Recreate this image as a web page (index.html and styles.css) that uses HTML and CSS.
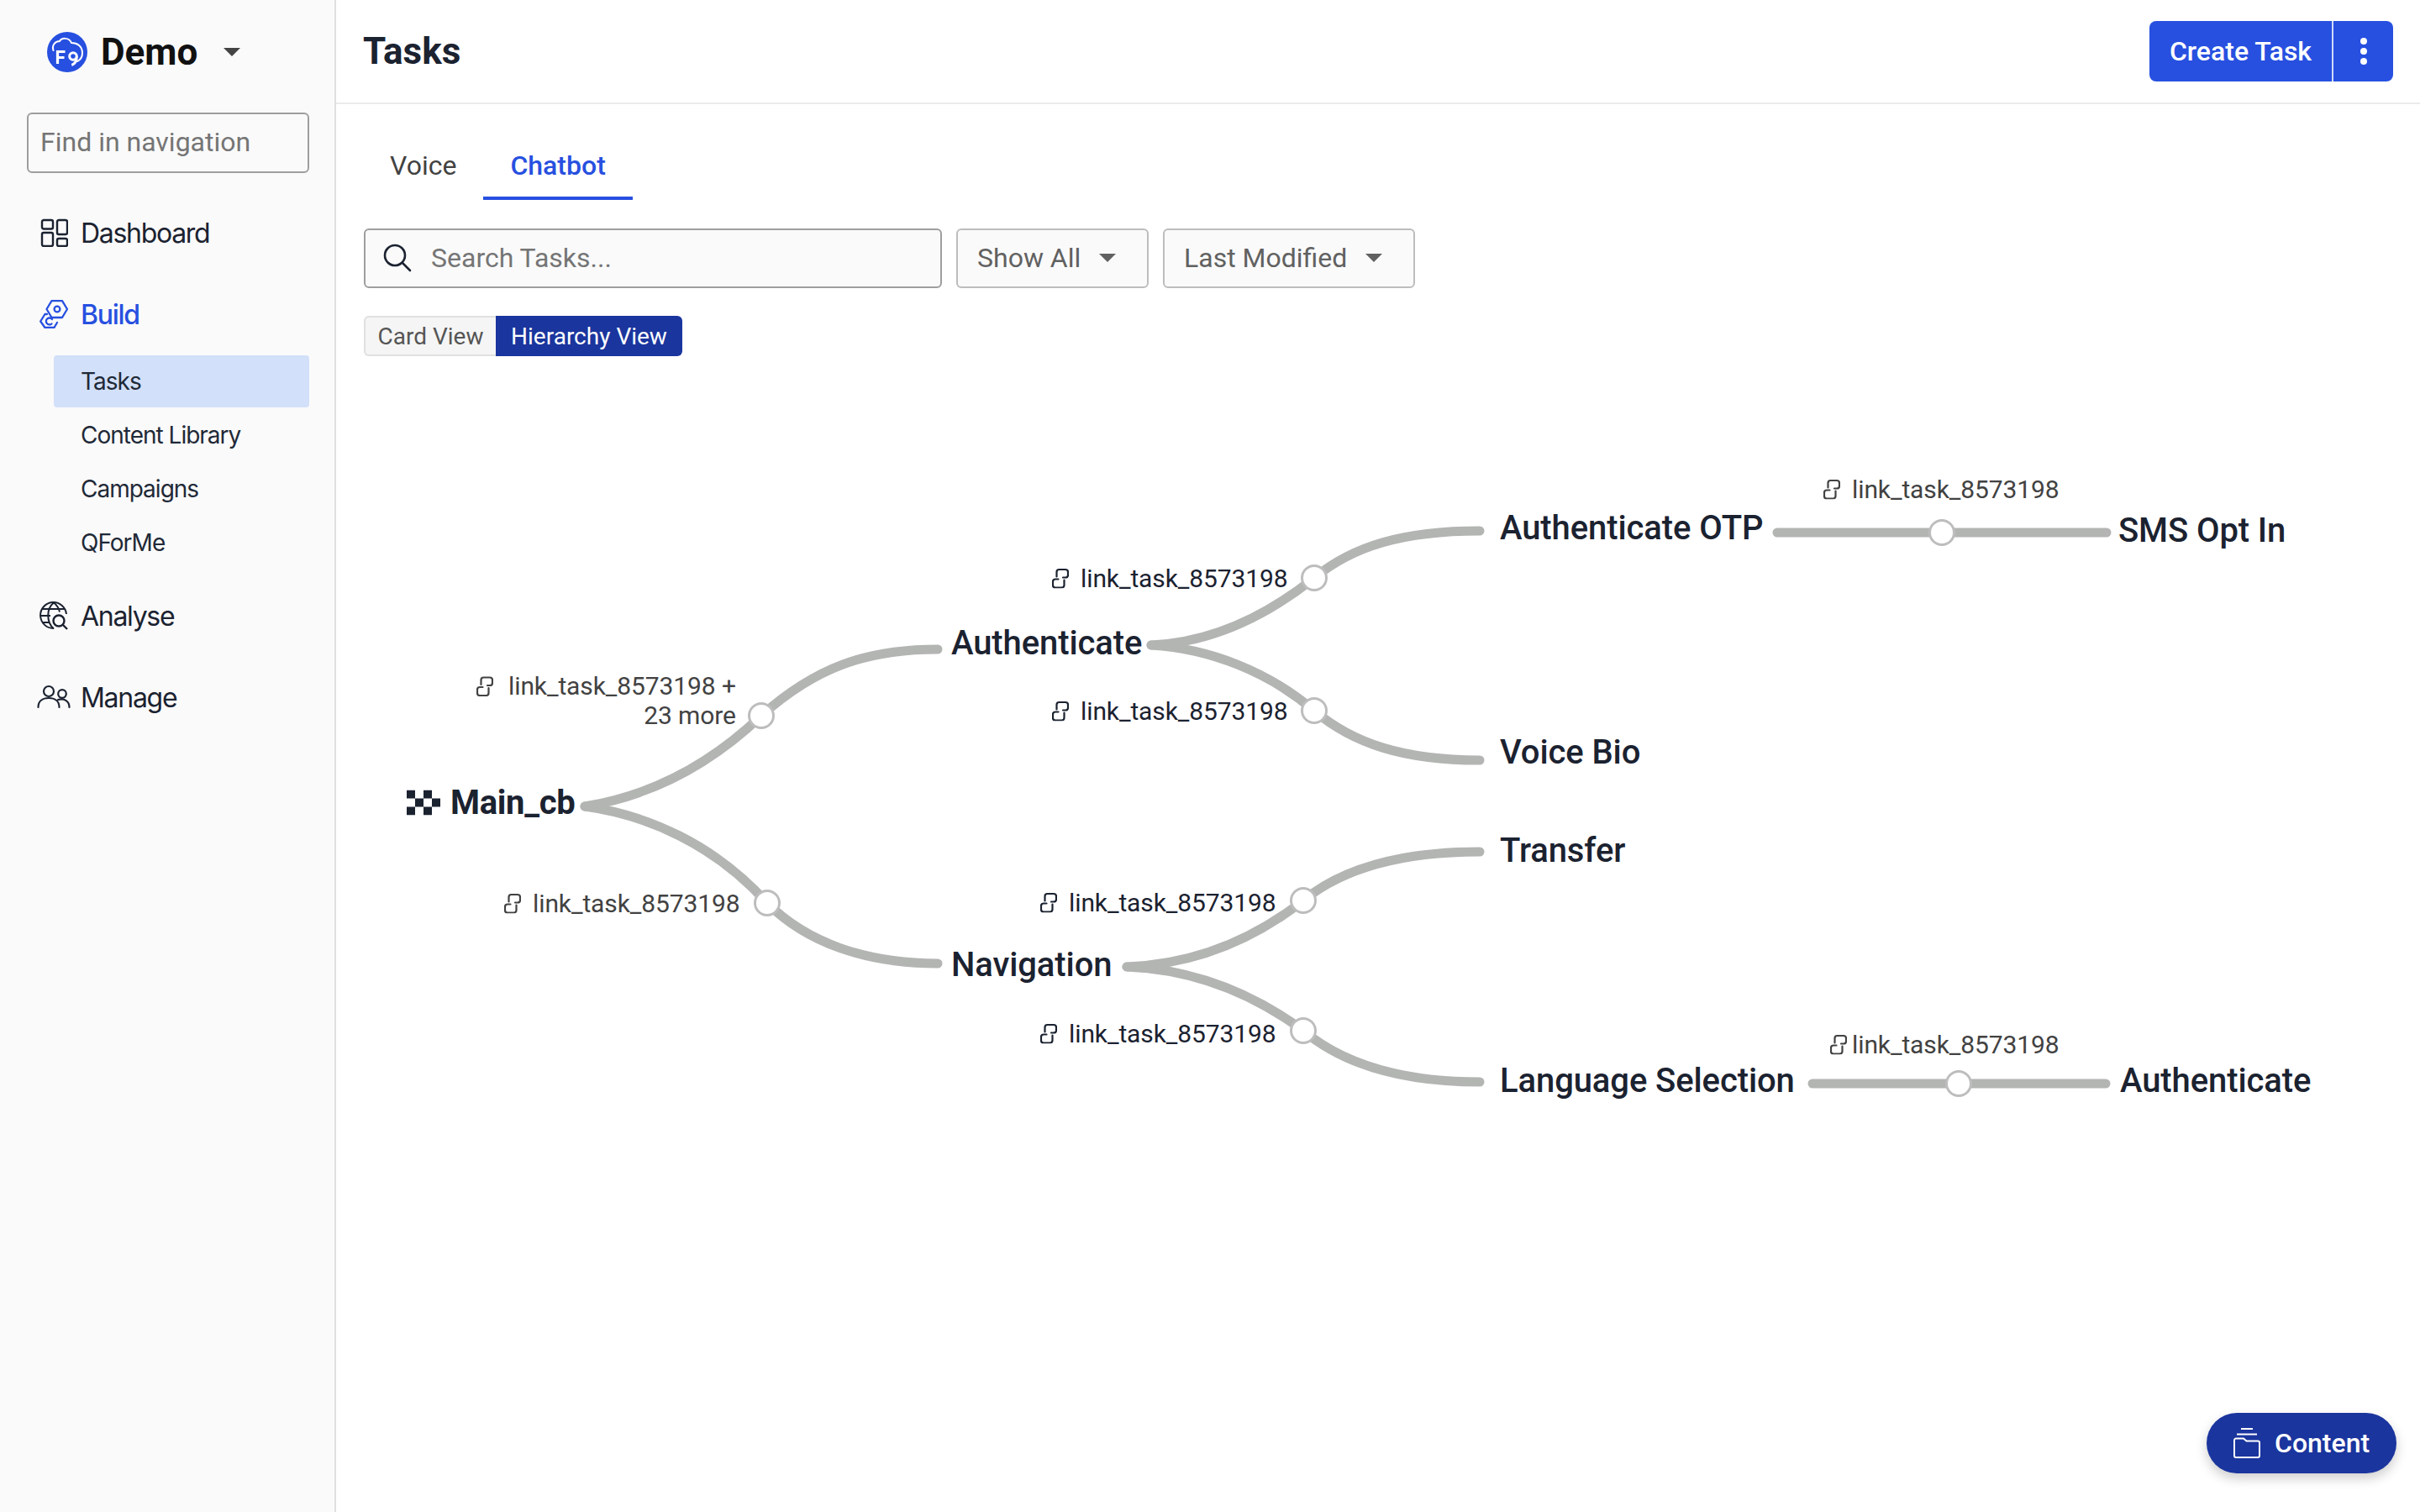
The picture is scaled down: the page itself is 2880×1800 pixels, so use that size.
FILE: index.html
```html
<!DOCTYPE html>
<html lang="en">
<head>
<meta charset="utf-8">
<title>Tasks</title>
<link rel="stylesheet" href="styles.css">
</head>
<body>
<svg class="defs" width="0" height="0" aria-hidden="true">
  <symbol id="lnk" viewBox="0 0 20 24">
    <path d="M5.500 10V4.500a3 3 0 0 1 3-3H16a3 3 0 0 1 3 3V8a3 3 0 0 1-3 3h-3M14.500 14v6a3 3 0 0 1-3 3H4a3 3 0 0 1-3-3v-4a3 3 0 0 1 3-3h3.500" fill="none" stroke="currentColor" stroke-width="2.200" stroke-linecap="round"/>
  </symbol>
</svg>
<div class="app">
  <aside class="sidebar">
    <div class="brand">
      <svg class="logo" viewBox="0 0 48 48">
        <circle cx="24" cy="24" r="24" fill="#2750e0"/>
        <path d="M7.500 22c-2-6 2-11 7.500-11 2-4 11-5 14 2 7 0 13 4 13 12 0 4-2 8-6 10" fill="none" stroke="#fff" stroke-width="2" stroke-linecap="round"/>
        <path d="M12.500 38V23.500h9M12.500 30.500h8" fill="none" stroke="#fff" stroke-width="3.200"/>
        <circle cx="31" cy="29" r="4.300" fill="none" stroke="#fff" stroke-width="3"/>
        <path d="M35.300 29c0 5-2 9-6 10.500" fill="none" stroke="#fff" stroke-width="3"/>
      </svg>
      <span class="brand-name">Demo</span>
      <span class="caret brand-caret"></span>
    </div>
    <div class="find">Find in navigation</div>
    <nav class="nav">
      <div class="nav-item">
        <svg class="nav-icon" viewBox="0 0 34 34" fill="none" stroke="#1b2230" stroke-width="2.400">
          <rect x="3" y="2" width="13" height="10.500" rx="2"/><rect x="3" y="17" width="13" height="16" rx="2"/><rect x="21" y="2" width="12" height="17" rx="2"/><rect x="21" y="24" width="12" height="9" rx="2"/>
        </svg>
        <span>Dashboard</span>
      </div>
      <div class="nav-item build">
        <svg class="nav-icon" viewBox="0 0 34 34" fill="none" stroke="#2750e0" stroke-width="2.300" stroke-linejoin="round" stroke-linecap="round">
          <path d="M8.500 11L14.500 1.200H27L33 11l-6 10H14.500z"/><circle cx="21" cy="11" r="3.400"/>
          <path d="M9 17H6.500L1.200 25.500 6.500 33H17.500l3.500-6"/><path d="M15 23a4 4 0 1 0-.5 5.500"/>
        </svg>
        <span>Build</span>
      </div>
      <ul class="subnav">
        <li class="sub-item active">Tasks</li>
        <li class="sub-item">Content Library</li>
        <li class="sub-item">Campaigns</li>
        <li class="sub-item">QForMe</li>
      </ul>
      <div class="nav-item analyse">
        <svg class="nav-icon" viewBox="0 0 34 34" fill="none" stroke="#1b2230" stroke-width="2">
          <path d="M17 32A15.500 15.500 0 1 1 32 15"/><path d="M2 17h11M4 9h26M4 25h8M17 1.500c-9 7-9 23 0 31M17 1.500c4 3 6 7 7 11"/>
          <circle cx="23" cy="23" r="6.500" stroke-width="2.400"/><path d="M28 28l5 5" stroke-width="2.400"/>
        </svg>
        <span>Analyse</span>
      </div>
      <div class="nav-item manage">
        <svg class="nav-icon wide" viewBox="0 0 40 30" fill="none" stroke="#1b2230" stroke-width="2.200" stroke-linecap="round">
          <circle cx="14" cy="8" r="6"/><path d="M1.500 27c0-7 5-11 12.500-11s12.500 4 12.500 11"/>
          <circle cx="30" cy="11" r="4.800"/><path d="M25 18c8-2 13.500 2 13.500 9"/>
        </svg>
        <span>Manage</span>
      </div>
    </nav>
  </aside>
  <main class="main">
    <header class="topbar">
      <h1 class="title">Tasks</h1>
      <div class="split">
        <span class="split-label">Create Task</span>
        <span class="split-more"><i></i><i></i><i></i></span>
      </div>
    </header>
    <div class="tabs">
      <span class="tab">Voice</span>
      <span class="tab on">Chatbot</span>
    </div>
    <div class="filters">
      <div class="search">
        <svg class="search-icon" viewBox="0 0 36 36" fill="none" stroke="#1b2230" stroke-width="2.600" stroke-linecap="round">
          <circle cx="15" cy="15" r="12"/><path d="M24 24l9 9"/>
        </svg>
        <span>Search Tasks...</span>
      </div>
      <div class="select show"><span>Show All</span><span class="caret"></span></div>
      <div class="select last"><span>Last Modified</span><span class="caret"></span></div>
    </div>
    <div class="views">
      <span class="view">Card View</span>
      <span class="view on">Hierarchy View</span>
    </div>
    <section class="tree">
      <svg class="wires" viewBox="0 0 2880 1800" fill="none" stroke="#b3b5b3" stroke-width="11" stroke-linecap="round">
        <path d="M696 960C770 948 840 915 906 852C970 795 1030 773 1116 773"/>
        <path d="M696 960C770 970 850 1005 913 1075C960 1122 1030 1147 1116 1147"/>
        <path d="M1370 768C1440 765 1505 735 1564 688C1610 650 1670 632 1761 632"/>
        <path d="M1370 768C1440 772 1510 800 1564 846C1610 885 1670 905 1761 905"/>
        <path d="M1341 1151C1420 1148 1490 1120 1551 1072C1600 1032 1670 1014 1761 1014"/>
        <path d="M1341 1151C1420 1154 1490 1182 1551 1227C1600 1268 1670 1288 1761 1288"/>
        <path d="M2115 634H2507"/>
        <path d="M2157 1290H2506"/>
      </svg>
      <span class="dot" style="left:906px;top:852px"></span>
      <span class="dot" style="left:913px;top:1075px"></span>
      <span class="dot" style="left:1564px;top:688px"></span>
      <span class="dot" style="left:1564px;top:846px"></span>
      <span class="dot" style="left:1551px;top:1072px"></span>
      <span class="dot" style="left:1551px;top:1227px"></span>
      <span class="dot" style="left:2311px;top:634px"></span>
      <span class="dot" style="left:2331px;top:1290px"></span>

      <div class="node root" style="left:484px;top:955px">
        <svg class="checker" viewBox="0 0 4 3" fill="#1b2230"><path d="M0 0h1v1H0zM2 0h1v1H2zM1 1h1v1H1zM3 1h1v1H3zM0 2h1v1H0zM2 2h1v1H2z"/></svg>
        <span>Main_cb</span>
      </div>
      <div class="node" style="left:1132px;top:765px">Authenticate</div>
      <div class="node" style="left:1132px;top:1148px">Navigation</div>
      <div class="node" style="left:1785px;top:628px">Authenticate OTP</div>
      <div class="node" style="left:1785px;top:895px">Voice Bio</div>
      <div class="node" style="left:1785px;top:1012px">Transfer</div>
      <div class="node" style="left:1785px;top:1286px">Language Selection</div>
      <div class="node" style="left:2521px;top:631px">SMS Opt In</div>
      <div class="node" style="left:2523px;top:1286px">Authenticate</div>

      <div class="link grey multi" style="left:567px;top:799px">
        <span class="link-row"><svg class="link-icon"><use href="#lnk"/></svg><span>link_task_8573198 +</span></span>
        <span>23 more</span>
      </div>
      <div class="link grey" style="left:600px;top:1075px"><svg class="link-icon"><use href="#lnk"/></svg><span>link_task_8573198</span></div>
      <div class="link" style="left:1252px;top:688px"><svg class="link-icon"><use href="#lnk"/></svg><span>link_task_8573198</span></div>
      <div class="link" style="left:1252px;top:846px"><svg class="link-icon"><use href="#lnk"/></svg><span>link_task_8573198</span></div>
      <div class="link" style="left:1238px;top:1074px"><svg class="link-icon"><use href="#lnk"/></svg><span>link_task_8573198</span></div>
      <div class="link" style="left:1238px;top:1230px"><svg class="link-icon"><use href="#lnk"/></svg><span>link_task_8573198</span></div>
      <div class="link grey" style="left:2170px;top:582px"><svg class="link-icon"><use href="#lnk"/></svg><span>link_task_8573198</span></div>
      <div class="link grey tight" style="left:2178px;top:1243px"><svg class="link-icon"><use href="#lnk"/></svg><span>link_task_8573198</span></div>
    </section>
    <div class="fab">
      <svg class="fab-icon" viewBox="0 0 32 36" fill="none" stroke="#fff" stroke-width="2" stroke-linejoin="round">
        <path d="M9 1h14M4 7.500h24"/>
        <path d="M1 14.500a2 2 0 0 1 2-2h9l3.500 3H29a2 2 0 0 1 2 2V33a2 2 0 0 1-2 2H3a2 2 0 0 1-2-2z"/>
      </svg>
      <span>Content</span>
    </div>
  </main>
</div>
</body>
</html>
```
FILE: styles.css
```css
* { box-sizing: border-box; }
html, body { margin: 0; height: 100%; }
body { background: #fff; font-family: Roboto, "Liberation Sans", sans-serif; color: #1b2230; overflow: hidden; }
.defs { position: absolute; }
.app { display: flex; height: 1800px; }

.sidebar { width: 400px; flex: none; background: #fafafa; border-right: 2px solid #e0e0e0; padding: 38px 30px 0 32px; }
.brand { display: flex; align-items: center; height: 48px; padding-left: 24px; }
.logo { width: 48px; height: 48px; flex: none; }
.brand-name { margin-left: 16px; font-weight: 700; font-size: 44px; color: #111; }
.caret { display: inline-block; width: 0; height: 0; flex: none; border-left: 10px solid transparent; border-right: 10px solid transparent; border-top: 10px solid #616161; }
.brand-caret { margin-left: 31px; border-top-color: #444; }
.find { margin-top: 48px; height: 72px; width: 336px; border: 2px solid #9e9e9e; border-radius: 6px; padding: 0 0 2px 14px; display: flex; align-items: center; font-size: 32px; color: #757575; }
.nav { margin-top: 39px; }
.nav-item { display: flex; align-items: center; height: 64px; font-family: Inter, sans-serif; font-size: 32px; letter-spacing: -1.3px; color: #1b2230; padding-left: 15px; }
.nav-icon { width: 34px; height: 34px; flex: none; margin-right: 15px; }
.nav-icon.wide { width: 40px; height: 30px; margin-left: -3px; margin-right: 12px; }
.build { margin-top: 33px; color: #2750e0; font-weight: 500; }
.subnav { list-style: none; margin: 17px 0 0 32px; padding: 0; }
.sub-item { height: 64px; display: flex; align-items: center; padding-left: 32px; font-family: Inter, sans-serif; font-size: 28px; letter-spacing: -1px; color: #1f2937; border-radius: 4px; }
.sub-item.active { background: #d2e0f9; height: 62px; margin-bottom: 1px; }
.analyse { margin-top: 23px; }
.manage { margin-top: 33px; }

.main { flex: 1; position: relative; min-width: 0; }
.topbar { display: flex; align-items: center; justify-content: space-between; height: 124px; border-bottom: 2px solid #ebebeb; padding: 0 32px; }
.title { margin: 0; font-weight: 700; font-size: 44px; color: #1b2230; }
.split { display: flex; height: 72px; background: #2750e0; border-radius: 8px; color: #fff; font-size: 32px; font-weight: 500; }
.split-label { width: 219px; display: flex; align-items: center; justify-content: center; border-right: 2px solid #cfd9f8; }
.split-more { width: 71px; display: flex; flex-direction: column; align-items: center; justify-content: center; gap: 4px; }
.split-more i { width: 8px; height: 8px; border-radius: 50%; background: #fff; }
.tabs { display: flex; margin: 0 0 0 32px; height: 114px; padding-top: 42px; }
.tab { display: flex; justify-content: center; align-items: center; height: 72px; padding: 0 32px 6px; font-size: 32px; color: #424242; border-bottom: 4px solid transparent; }
.tab.on { color: #2750e0; font-weight: 500; border-bottom-color: #2750e0; }
.filters { display: flex; gap: 17px; margin: 34px 0 0 33px; height: 71px; }
.search { width: 688px; display: flex; align-items: center; background: #fafafa; border: 2px solid #9e9e9e; border-radius: 6px; font-size: 32px; color: #757575; padding: 0 0 2px 20px; }
.search-icon { width: 36px; height: 36px; margin-right: 22px; }
.select { display: flex; align-items: center; gap: 22px; background: #fafafa; border: 2px solid #bdbdbd; border-radius: 6px; padding: 0 0 2px 23px; font-size: 32px; color: #616161; }
.select.show { width: 229px; }
.select.last { width: 300px; }
.views { display: flex; margin: 33px 0 0 33px; height: 48px; font-size: 28px; }
.view { display: flex; align-items: center; justify-content: center; width: 157px; background: #f5f5f5; border: 2px solid #e0e0e0; border-right: 0; border-radius: 6px 0 0 6px; color: #555; }
.view.on { width: 222px; background: #1a359e; border: 0; border-radius: 0 6px 6px 0; color: #fff; }

.tree { position: absolute; left: -400px; top: 0; width: 2880px; height: 1800px; pointer-events: none; }
.wires { position: absolute; left: 0; top: 0; width: 2880px; height: 1800px; }
.dot { position: absolute; width: 32px; height: 32px; margin: -16px 0 0 -16px; border-radius: 50%; background: #fff; border: 3px solid #bdbdbd; }
.node { position: absolute; transform: translateY(-50%); display: flex; align-items: center; font-size: 40px; font-weight: 500; letter-spacing: -0.1px; color: #1b2230; white-space: nowrap; }
.root { font-weight: 700; letter-spacing: -0.3px; }
.checker { width: 40px; height: 30px; margin-right: 12px; }
.link { position: absolute; transform: translateY(-50%); display: flex; align-items: center; font-size: 30px; letter-spacing: -0.1px; color: #1b2230; white-space: nowrap; }
.link.grey { color: #424242; }
.link-icon { width: 20px; height: 24px; margin-right: 14px; }
.link.tight .link-icon { margin-right: 6px; }
.link.multi { display: flex; flex-direction: column; align-items: flex-end; transform: none; line-height: 35px; }
.link-row { display: flex; align-items: center; }
.link-row .link-icon { margin-right: 18px; }
.fab { position: absolute; right: 28px; top: 1682px; width: 226px; height: 72px; display: flex; align-items: center; padding-left: 32px; gap: 17px; background: #1a359e; border-radius: 36px; color: #fff; font-size: 32px; font-weight: 500; box-shadow: 0 6px 14px rgba(0,0,0,.2); }
.fab-icon { width: 32px; height: 36px; }
```
